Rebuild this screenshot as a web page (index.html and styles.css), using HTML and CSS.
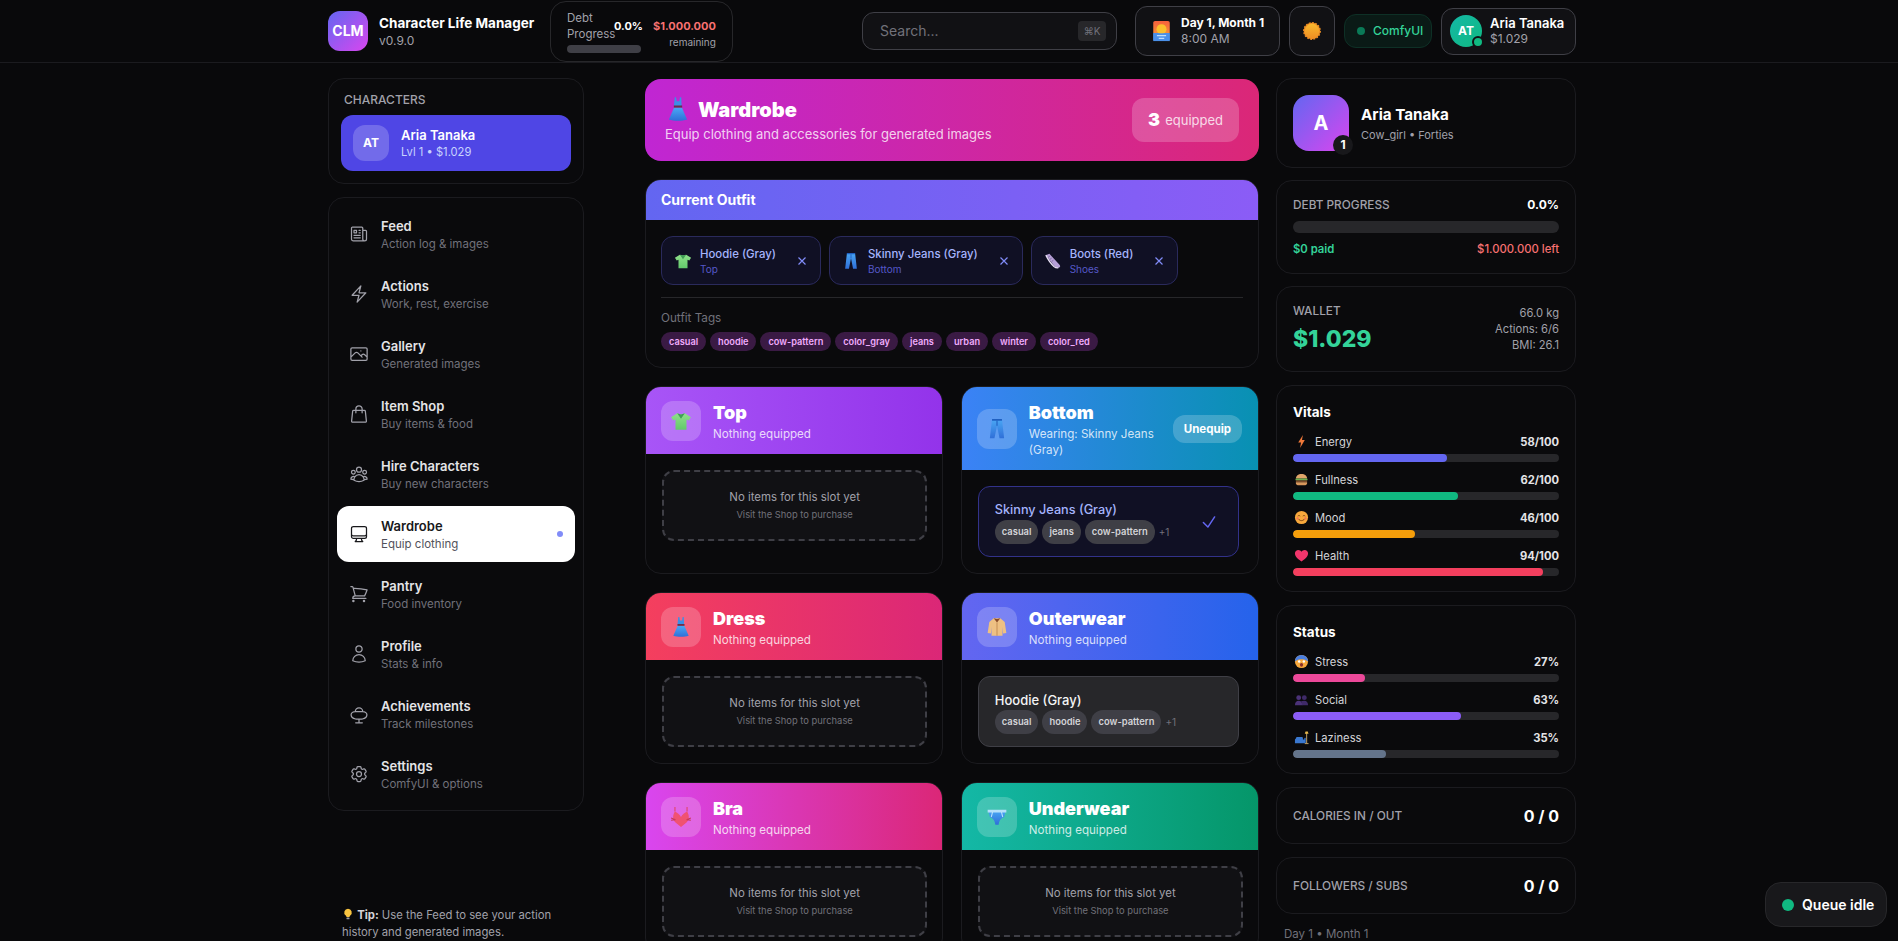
FILE: index.html
```html
<!DOCTYPE html>
<html lang="en">
<head>
  <meta charset="UTF-8">
  <title>Character Life Manager</title>
  <link rel="stylesheet" href="styles.css">
</head>
<body>
  <!-- emoji sprite -->
  <svg class="sprite" xmlns="http://www.w3.org/2000/svg">
    <defs>
      <linearGradient id="g-blue" x1="0" y1="0" x2="0" y2="1"><stop offset="0" stop-color="#4aa8f5"/><stop offset="1" stop-color="#2f6fd8"/></linearGradient>
      <linearGradient id="g-green" x1="0" y1="0" x2="0" y2="1"><stop offset="0" stop-color="#8fe08a"/><stop offset="1" stop-color="#62c96c"/></linearGradient>
      <linearGradient id="g-cal" x1="0" y1="0" x2="0" y2="1"><stop offset="0" stop-color="#f7603c"/><stop offset="0.6" stop-color="#f58a3a"/><stop offset="0.61" stop-color="#4a90e8"/><stop offset="1" stop-color="#3f7fdc"/></linearGradient>
      <linearGradient id="g-sun" x1="0" y1="0" x2="0" y2="1"><stop offset="0" stop-color="#f9b92d"/><stop offset="1" stop-color="#ef8f24"/></linearGradient>
    </defs>
    <symbol id="e-dress" viewBox="0 0 20 20"><path d="M7.5 1h1l.5 3h2l.5-3h1l.3 7h-6z" fill="#3b8fe6"/><path d="M7 8.800h6l4 9.200c-4 1.300-10 1.300-14 0z" fill="url(#g-blue)"/><rect x="6.800" y="7.300" width="6.400" height="1.600" fill="#6b2d4a"/></symbol>
    <symbol id="e-shirt" viewBox="0 0 20 20"><path d="M6.500 3l3.500 1 3.500-1L19 6.500l-2 3-2-.8V18H5V8.700l-2 .8-2-3z" fill="url(#g-green)"/><path d="M6.500 3L10 8l3.500-5-3.500 1z" fill="#3f9e55"/></symbol>
    <symbol id="e-jeans" viewBox="0 0 20 20"><path d="M5.500 1h9l2 17.500h-4.200L10 7l-2.300 11.500H3.500z" fill="url(#g-blue)"/><path d="M5.500 1h9v1.500h-9z" fill="#1f5fc0"/><path d="M10 2.500V7" stroke="#1f5fc0" fill="none"/></symbol>
    <symbol id="e-boot" viewBox="0 0 20 20"><path d="M2 3.500l4-1.500 11.500 12.500c1 1.500.300 3-1.500 3-2 0-3.500-.5-5-2.500z" fill="#b7a0d8"/><path d="M2 3.500c2.500 5 5.500 9.500 9 12.500 1.500 1.200 3.500 1.800 5 1.500" stroke="#e8e0f4" stroke-width="1.400" fill="none"/><path d="M6.500 4.500l-2 1.500m4 .8l-2 1.500m4 .8l-2 1.500" stroke="#7a6a9a" stroke-width="1"/></symbol>
    <symbol id="e-coat" viewBox="0 0 20 20"><path d="M7 2h6l4 3.500 1.500 10-3 .5-.5-6v8H5V10l-.5 6-3-.5L3 5.500z" fill="#eec083"/><path d="M7 2l3 4 3-4-3 .8z" fill="#8a4b2a"/><path d="M10 6v12" stroke="#c9935a"/></symbol>
    <symbol id="e-bra" viewBox="0 0 20 20"><path d="M4.500 1v4M15.500 1v4" stroke="#e0456a" stroke-width="1"/><path d="M4.500 5c2 1 4.500 3 5.500 5 1-2 3.500-4 5.500-5 2 3 2.500 7-.5 10l-5 4-5-4c-3-3-2.500-7-.5-10z" fill="#f05272"/><path d="M1 11l4 1.500m14-1.500l-4 1.500M1 13l4-.5m14 .5l-4-.5" stroke="#c93a5a" stroke-width="1"/></symbol>
    <symbol id="e-briefs" viewBox="0 0 20 20"><path d="M2 4h16l-1.500 6c-2.500 1-4.500 3-5 7h-3c-.5-4-2.500-6-5-7z" fill="url(#g-blue)"/><path d="M2 4h16v1.400H2zM6 5.400L4.800 10M14 5.400l1.200 4.600" stroke="#b6e0fa" stroke-width="1" fill="#b6e0fa"/></symbol>
    <symbol id="e-cal" viewBox="0 0 20 24"><rect x="1" y="1" width="18" height="22" rx="2" fill="url(#g-cal)"/><circle cx="10" cy="10" r="5.500" fill="#fbc02d"/><rect x="1" y="14.500" width="18" height="8.500" fill="#4a90e8"/><path d="M5 17h10M7 20h6" stroke="#bcdcfb" stroke-width="1.200"/></symbol>
    <symbol id="e-sun" viewBox="0 0 20 20"><circle cx="10" cy="10" r="9.200" fill="#ef8f24" stroke="#ef8f24" stroke-width="1.400" stroke-dasharray="2 1.600"/><circle cx="10" cy="10" r="8" fill="url(#g-sun)"/></symbol>
    <symbol id="e-bolt" viewBox="0 0 16 16"><path d="M9.500 1L4.500 9h3L6.500 15l5-8.500h-3z" fill="#f0793a"/></symbol>
    <symbol id="e-burger" viewBox="0 0 16 16"><path d="M2 7c0-3 2.500-5 6-5s6 2 6 5z" fill="#e0a56a"/><rect x="1.500" y="7" width="13" height="2" rx="1" fill="#6fae4f"/><rect x="2" y="9" width="12" height="1.800" fill="#7a4a2a"/><path d="M2 10.800h12v1.200c0 1-1 2-2 2H4c-1 0-2-1-2-2z" fill="#d8985c"/></symbol>
    <symbol id="e-smile" viewBox="0 0 16 16"><circle cx="8" cy="8" r="7" fill="#f7a83c"/><path d="M4 6.500c.8-.8 1.800-.8 2.600 0M9.400 6.500c.8-.8 1.800-.8 2.600 0" stroke="#7a3f12" fill="none"/><path d="M4.800 9.500c1.500 2.400 4.900 2.400 6.400 0" stroke="#7a3f12" fill="none"/><circle cx="3.800" cy="9" r="1.200" fill="#f2705a"/><circle cx="12.200" cy="9" r="1.200" fill="#f2705a"/></symbol>
    <symbol id="e-heart" viewBox="0 0 16 16"><path d="M8 14.500C3 11 1 8.500 1 5.700 1 3.500 2.700 2 4.600 2 6 2 7.300 2.800 8 4c.7-1.200 2-2 3.400-2C13.300 2 15 3.500 15 5.700c0 2.800-2 5.300-7 8.800z" fill="#f0356b"/></symbol>
    <symbol id="e-stress" viewBox="0 0 16 16"><circle cx="8" cy="8" r="7" fill="#f7a83c"/><path d="M1 8a7 7 0 0114 0c-2-2-4.500-2.500-7-2.500S3 6 1 8z" fill="#4a7fe0"/><circle cx="5.500" cy="8" r="1.300" fill="#fff"/><circle cx="10.500" cy="8" r="1.300" fill="#fff"/><ellipse cx="8" cy="11.500" rx="1.700" ry="2" fill="#8a2f2a"/></symbol>
    <symbol id="e-social" viewBox="0 0 16 16"><circle cx="5" cy="6" r="2.600" fill="#4b3278"/><circle cx="11" cy="6" r="2.600" fill="#3f2a68"/><path d="M1 14c0-3 1.500-4.800 4-4.800S9 11 9 14z" fill="#4b3278"/><path d="M8.500 14c0-2-.5-3.500-1-4.300.9-.3 2-.5 3.500-.5 2.500 0 4 1.800 4 4.800z" fill="#3f2a68"/></symbol>
    <symbol id="e-couch" viewBox="0 0 16 16"><path d="M2 9c0-1 1-1.500 2-1.500h4c1 0 1.500.5 1.500 1.500v1H11V9c0-1 1-1 1.500-.5V14H1V10z" fill="#3a78d0"/><path d="M13.500 3v11M11.500 14.500h4" stroke="#c9a86a" stroke-width="1"/><path d="M12.300 1.500h2.400l.8 2.500h-4z" fill="#e8b84a"/></symbol>
    <symbol id="e-bulb" viewBox="0 0 16 16"><path d="M8 1a5 5 0 00-3 9c.6.500 1 1.200 1 2h4c0-.8.400-1.500 1-2a5 5 0 00-3-9z" fill="#f9c440"/><rect x="6" y="12.500" width="4" height="2.500" rx=".8" fill="#9a9aa2"/></symbol>
  </svg>

  <header class="topbar">
    <div class="topbar-inner">
      <div class="brand">
        <div class="brand-logo">CLM</div>
        <div>
          <div class="brand-name">Character Life Manager</div>
          <div class="brand-version">v0.9.0</div>
        </div>
      </div>

      <div class="debt-mini">
        <div class="debt-mini-left">
          <div class="debt-mini-row">
            <span class="debt-mini-label">Debt Progress</span>
            <span class="debt-mini-pct">0.0%</span>
          </div>
          <div class="debt-mini-bar"></div>
        </div>
        <div class="debt-mini-right">
          <div class="debt-mini-amount">$1.000.000</div>
          <div class="debt-mini-rem">remaining</div>
        </div>
      </div>

      <div class="search">
        <span>Search...</span>
        <kbd>⌘K</kbd>
      </div>

      <div class="top-pills">
        <div class="pill pill-date">
          <svg class="pill-cal"><use href="#e-cal"/></svg>
          <div>
            <div class="pill-strong">Day 1, Month 1</div>
            <div class="pill-muted">8:00 AM</div>
          </div>
        </div>
        <div class="pill pill-sun"><svg class="emoji-18"><use href="#e-sun"/></svg></div>
        <div class="pill-comfy"><i></i>ComfyUI</div>
        <div class="pill pill-user">
          <div class="user-avatar">AT<i></i></div>
          <div>
            <div class="pill-strong pill-name">Aria Tanaka</div>
            <div class="pill-muted">$1.029</div>
          </div>
        </div>
      </div>
    </div>
  </header>

  <div class="layout">
    <aside class="sidebar">
      <section class="card chars">
        <h4 class="chars-title">CHARACTERS</h4>
        <div class="char-btn">
          <div class="char-avatar">AT</div>
          <div>
            <div class="char-name">Aria Tanaka</div>
            <div class="char-sub">Lvl 1 • $1.029</div>
          </div>
        </div>
      </section>

      <nav class="card nav">
        <a class="nav-item">
          <svg class="nav-icon" viewBox="0 0 24 24"><path d="M12 7.500h1.500m-1.500 3h1.500m-7.500 3h7.500m-7.500 3h7.500m3-9h3.375c.621 0 1.125.504 1.125 1.125V18a2.250 2.250 0 01-2.250 2.250M16.500 7.500V18a2.250 2.250 0 002.250 2.250M16.500 7.500V4.875c0-.621-.504-1.125-1.125-1.125H4.125C3.504 3.750 3 4.254 3 4.875V18a2.250 2.250 0 002.250 2.250h13.500M6 7.500h3v3H6v-3z"/></svg>
          <div><div class="nav-title">Feed</div><div class="nav-sub">Action log &amp; images</div></div>
        </a>
        <a class="nav-item">
          <svg class="nav-icon" viewBox="0 0 24 24"><path d="M3.750 13.500l10.500-11.250L12 10.500h8.250L9.750 21.750 12 13.500H3.750z"/></svg>
          <div><div class="nav-title">Actions</div><div class="nav-sub">Work, rest, exercise</div></div>
        </a>
        <a class="nav-item">
          <svg class="nav-icon" viewBox="0 0 24 24"><path d="M2.250 15.750l5.159-5.159a2.250 2.250 0 013.182 0l5.159 5.159m-1.500-1.500l1.409-1.409a2.250 2.250 0 013.182 0l2.909 2.909m-18 3.750h16.500a1.500 1.500 0 001.500-1.500V6a1.500 1.500 0 00-1.500-1.500H3.750A1.500 1.500 0 002.250 6v12a1.500 1.500 0 001.500 1.500zm10.500-11.250h.008v.008h-.008V8.250z"/></svg>
          <div><div class="nav-title">Gallery</div><div class="nav-sub">Generated images</div></div>
        </a>
        <a class="nav-item">
          <svg class="nav-icon" viewBox="0 0 24 24"><path d="M15.750 10.500V6a3.750 3.750 0 10-7.500 0v4.500m11.356-1.993l1.263 12c.07.665-.45 1.243-1.119 1.243H4.250a1.125 1.125 0 01-1.120-1.243l1.264-12A1.125 1.125 0 015.513 7.500h12.974c.576 0 1.059.435 1.119 1.007z"/></svg>
          <div><div class="nav-title">Item Shop</div><div class="nav-sub">Buy items &amp; food</div></div>
        </a>
        <a class="nav-item">
          <svg class="nav-icon" viewBox="0 0 24 24"><path d="M18 18.720a9.094 9.094 0 003.741-.479 3 3 0 00-4.682-2.720m.94 3.198l.001.031c0 .225-.012.447-.037.666A11.944 11.944 0 0112 21c-2.170 0-4.207-.576-5.963-1.584A6.062 6.062 0 016 18.719m12 0a5.971 5.971 0 00-.941-3.197m0 0A5.995 5.995 0 0012 12.750a5.995 5.995 0 00-5.058 2.772m0 0a3 3 0 00-4.681 2.720 8.986 8.986 0 003.740.477m.94-3.197a5.971 5.971 0 00-.94 3.197M15 6.750a3 3 0 11-6 0 3 3 0 016 0zm6 3a2.250 2.250 0 11-4.500 0 2.250 2.250 0 014.500 0zm-13.500 0a2.250 2.250 0 11-4.500 0 2.250 2.250 0 014.500 0z"/></svg>
          <div><div class="nav-title">Hire Characters</div><div class="nav-sub">Buy new characters</div></div>
        </a>
        <a class="nav-item active">
          <svg class="nav-icon" viewBox="0 0 24 24"><path d="M9 17.250v1.007a3 3 0 01-.879 2.122L7.500 21h9l-.621-.621A3 3 0 0115 18.257V17.250m6-12V15a2.250 2.250 0 01-2.250 2.250H5.250A2.250 2.250 0 013 15V5.250m18 0A2.250 2.250 0 0018.750 3H5.250A2.250 2.250 0 003 5.250m18 0V12a2.250 2.250 0 01-2.250 2.250H5.250A2.250 2.250 0 013 12V5.250"/></svg>
          <div><div class="nav-title">Wardrobe</div><div class="nav-sub">Equip clothing</div></div>
          <i class="nav-dot"></i>
        </a>
        <a class="nav-item">
          <svg class="nav-icon" viewBox="0 0 24 24"><path d="M2.250 3h1.386c.51 0 .955.343 1.087.835l.383 1.437M7.500 14.250a3 3 0 00-3 3h15.750m-12.750-3h11.218c1.121-2.300 2.100-4.684 2.924-7.138a60.114 60.114 0 00-16.536-1.840M7.500 14.250L5.106 5.272M6 20.250a.75.75 0 11-1.500 0 .75.75 0 011.500 0zm12.750 0a.75.75 0 11-1.500 0 .75.75 0 011.500 0z"/></svg>
          <div><div class="nav-title">Pantry</div><div class="nav-sub">Food inventory</div></div>
        </a>
        <a class="nav-item">
          <svg class="nav-icon" viewBox="0 0 24 24"><path d="M15.750 6a3.750 3.750 0 11-7.500 0 3.750 3.750 0 017.500 0zM4.501 20.118a7.500 7.500 0 0114.998 0A17.933 17.933 0 0112 21.750c-2.676 0-5.216-.584-7.499-1.632z"/></svg>
          <div><div class="nav-title">Profile</div><div class="nav-sub">Stats &amp; info</div></div>
        </a>
        <a class="nav-item">
          <svg class="nav-icon" viewBox="0 0 24 24"><path d="M7.500 9a4.500 4.500 0 019 0M7.500 9C5 9 2.500 10.500 2.500 13s2.500 4.500 5.500 5h8c3-.5 5.500-2.500 5.500-5s-2.500-4-5-4h-9zM12 18v4M8 22.500h8"/></svg>
          <div><div class="nav-title">Achievements</div><div class="nav-sub">Track milestones</div></div>
        </a>
        <a class="nav-item">
          <svg class="nav-icon" viewBox="0 0 24 24"><path d="M9.594 3.940c.09-.542.56-.94 1.110-.94h2.593c.55 0 1.020.398 1.110.94l.213 1.281c.063.374.313.686.645.870.074.04.147.083.22.127.324.196.72.257 1.075.124l1.217-.456a1.125 1.125 0 011.370.49l1.296 2.247a1.125 1.125 0 01-.26 1.431l-1.003.827c-.293.24-.438.613-.431.992a6.759 6.759 0 010 .255c-.007.378.138.75.43.99l1.005.828c.424.35.534.954.26 1.430l-1.298 2.247a1.125 1.125 0 01-1.369.491l-1.217-.456c-.355-.133-.75-.072-1.076.124a6.570 6.570 0 01-.22.128c-.331.183-.581.495-.644.869l-.213 1.280c-.09.543-.56.941-1.110.941h-2.594c-.55 0-1.020-.398-1.110-.94l-.213-1.281c-.062-.374-.312-.686-.644-.870a6.520 6.520 0 01-.22-.127c-.325-.196-.72-.257-1.076-.124l-1.217.456a1.125 1.125 0 01-1.369-.49l-1.297-2.247a1.125 1.125 0 01.26-1.431l1.004-.827c.292-.24.437-.613.43-.992a6.932 6.932 0 010-.255c.007-.378-.138-.75-.43-.99l-1.004-.828a1.125 1.125 0 01-.26-1.430l1.297-2.247a1.125 1.125 0 011.370-.491l1.216.456c.356.133.751.072 1.076-.124.072-.044.146-.087.22-.128.332-.183.582-.495.644-.869l.214-1.281zM15 12a3 3 0 11-6 0 3 3 0 016 0z"/></svg>
          <div><div class="nav-title">Settings</div><div class="nav-sub">ComfyUI &amp; options</div></div>
        </a>
      </nav>

      <p class="tip"><svg class="emoji-12"><use href="#e-bulb"/></svg> <b>Tip:</b> Use the Feed to see your action history and generated images.</p>
    </aside>

    <main class="main">
      <section class="banner">
        <div>
          <h1 class="banner-title"><svg class="emoji-24"><use href="#e-dress"/></svg>Wardrobe</h1>
          <p class="banner-sub">Equip clothing and accessories for generated images</p>
        </div>
        <div class="banner-badge"><b>3</b> equipped</div>
      </section>

      <section class="card outfit">
        <div class="outfit-head">Current Outfit</div>
        <div class="outfit-body">
          <div class="chips">
            <div class="chip">
              <svg class="emoji-16"><use href="#e-shirt"/></svg>
              <div class="chip-text"><div class="chip-name">Hoodie (Gray)</div><div class="chip-slot">Top</div></div>
              <svg class="chip-x" viewBox="0 0 12 12"><path d="M2.500 2.500l7 7m0-7l-7 7"/></svg>
            </div>
            <div class="chip">
              <svg class="emoji-16"><use href="#e-jeans"/></svg>
              <div class="chip-text"><div class="chip-name">Skinny Jeans (Gray)</div><div class="chip-slot">Bottom</div></div>
              <svg class="chip-x" viewBox="0 0 12 12"><path d="M2.500 2.500l7 7m0-7l-7 7"/></svg>
            </div>
            <div class="chip">
              <svg class="emoji-16"><use href="#e-boot"/></svg>
              <div class="chip-text"><div class="chip-name">Boots (Red)</div><div class="chip-slot">Shoes</div></div>
              <svg class="chip-x" viewBox="0 0 12 12"><path d="M2.500 2.500l7 7m0-7l-7 7"/></svg>
            </div>
          </div>
          <div class="outfit-tags">
            <div class="outfit-tags-label">Outfit Tags</div>
            <div class="tags">
              <span class="tag-pink">casual</span>
              <span class="tag-pink">hoodie</span>
              <span class="tag-pink">cow-pattern</span>
              <span class="tag-pink">color_gray</span>
              <span class="tag-pink">jeans</span>
              <span class="tag-pink">urban</span>
              <span class="tag-pink">winter</span>
              <span class="tag-pink">color_red</span>
            </div>
          </div>
        </div>
      </section>

      <div class="slots">
        <section class="card slot">
          <div class="slot-head g-top">
            <div class="slot-icon"><svg class="emoji-20"><use href="#e-shirt"/></svg></div>
            <div class="slot-info"><h3>Top</h3><p>Nothing equipped</p></div>
          </div>
          <div class="slot-body">
            <div class="empty"><div class="empty-main">No items for this slot yet</div><div class="empty-sub">Visit the Shop to purchase</div></div>
          </div>
        </section>

        <section class="card slot">
          <div class="slot-head g-bottom">
            <div class="slot-icon"><svg class="emoji-20"><use href="#e-jeans"/></svg></div>
            <div class="slot-info"><h3>Bottom</h3><p>Wearing: Skinny Jeans (Gray)</p></div>
            <button class="unequip">Unequip</button>
          </div>
          <div class="slot-body">
            <div class="item item-on">
              <div class="item-main">
                <div class="item-name">Skinny Jeans (Gray)</div>
                <div class="item-tags"><span>casual</span><span>jeans</span><span>cow-pattern</span><em>+1</em></div>
              </div>
              <svg class="item-check" viewBox="0 0 24 24"><path d="M4.500 12.750l6 6 9-13.500"/></svg>
            </div>
          </div>
        </section>

        <section class="card slot">
          <div class="slot-head g-dress">
            <div class="slot-icon"><svg class="emoji-20"><use href="#e-dress"/></svg></div>
            <div class="slot-info"><h3>Dress</h3><p>Nothing equipped</p></div>
          </div>
          <div class="slot-body">
            <div class="empty"><div class="empty-main">No items for this slot yet</div><div class="empty-sub">Visit the Shop to purchase</div></div>
          </div>
        </section>

        <section class="card slot">
          <div class="slot-head g-outer">
            <div class="slot-icon"><svg class="emoji-20"><use href="#e-coat"/></svg></div>
            <div class="slot-info"><h3>Outerwear</h3><p>Nothing equipped</p></div>
          </div>
          <div class="slot-body">
            <div class="item">
              <div class="item-main">
                <div class="item-name">Hoodie (Gray)</div>
                <div class="item-tags"><span>casual</span><span>hoodie</span><span>cow-pattern</span><em>+1</em></div>
              </div>
            </div>
          </div>
        </section>

        <section class="card slot">
          <div class="slot-head g-bra">
            <div class="slot-icon"><svg class="emoji-20"><use href="#e-bra"/></svg></div>
            <div class="slot-info"><h3>Bra</h3><p>Nothing equipped</p></div>
          </div>
          <div class="slot-body">
            <div class="empty"><div class="empty-main">No items for this slot yet</div><div class="empty-sub">Visit the Shop to purchase</div></div>
          </div>
        </section>

        <section class="card slot">
          <div class="slot-head g-under">
            <div class="slot-icon"><svg class="emoji-20"><use href="#e-briefs"/></svg></div>
            <div class="slot-info"><h3>Underwear</h3><p>Nothing equipped</p></div>
          </div>
          <div class="slot-body">
            <div class="empty"><div class="empty-main">No items for this slot yet</div><div class="empty-sub">Visit the Shop to purchase</div></div>
          </div>
        </section>
      </div>
    </main>

    <aside class="rightbar">
      <section class="card profile">
        <div class="profile-avatar">A<span class="profile-level">1</span></div>
        <div>
          <div class="profile-name">Aria Tanaka</div>
          <div class="profile-sub">Cow_girl • Forties</div>
        </div>
      </section>

      <section class="card pad">
        <div class="row-between">
          <span class="label">DEBT PROGRESS</span>
          <span class="debt-pct">0.0%</span>
        </div>
        <div class="debt-bar"></div>
        <div class="row-between debt-foot">
          <span class="paid">$0 paid</span>
          <span class="left">$1.000.000 left</span>
        </div>
      </section>

      <section class="card pad wallet">
        <div>
          <div class="label">WALLET</div>
          <div class="wallet-amount">$1.029</div>
        </div>
        <div class="wallet-stats">
          <div>66.0 kg</div>
          <div>Actions: 6/6</div>
          <div>BMI: 26.1</div>
        </div>
      </section>

      <section class="card pad">
        <h4 class="stats-title">Vitals</h4>
        <div class="stat">
          <div class="stat-row"><svg class="emoji-14"><use href="#e-bolt"/></svg><span class="stat-name">Energy</span><span class="stat-val">58/100</span></div>
          <div class="stat-track"><div class="stat-fill c-energy" style="width: 58%"></div></div>
        </div>
        <div class="stat">
          <div class="stat-row"><svg class="emoji-14"><use href="#e-burger"/></svg><span class="stat-name">Fullness</span><span class="stat-val">62/100</span></div>
          <div class="stat-track"><div class="stat-fill c-full" style="width: 62%"></div></div>
        </div>
        <div class="stat">
          <div class="stat-row"><svg class="emoji-14"><use href="#e-smile"/></svg><span class="stat-name">Mood</span><span class="stat-val">46/100</span></div>
          <div class="stat-track"><div class="stat-fill c-mood" style="width: 46%"></div></div>
        </div>
        <div class="stat">
          <div class="stat-row"><svg class="emoji-14"><use href="#e-heart"/></svg><span class="stat-name">Health</span><span class="stat-val">94/100</span></div>
          <div class="stat-track"><div class="stat-fill c-health" style="width: 94%"></div></div>
        </div>
      </section>

      <section class="card pad">
        <h4 class="stats-title">Status</h4>
        <div class="stat">
          <div class="stat-row"><svg class="emoji-14"><use href="#e-stress"/></svg><span class="stat-name">Stress</span><span class="stat-val">27%</span></div>
          <div class="stat-track"><div class="stat-fill c-stress" style="width: 27%"></div></div>
        </div>
        <div class="stat">
          <div class="stat-row"><svg class="emoji-14"><use href="#e-social"/></svg><span class="stat-name">Social</span><span class="stat-val">63%</span></div>
          <div class="stat-track"><div class="stat-fill c-social" style="width: 63%"></div></div>
        </div>
        <div class="stat">
          <div class="stat-row"><svg class="emoji-14"><use href="#e-couch"/></svg><span class="stat-name">Laziness</span><span class="stat-val">35%</span></div>
          <div class="stat-track"><div class="stat-fill c-lazy" style="width: 35%"></div></div>
        </div>
      </section>

      <section class="card pad row-between">
        <span class="label">CALORIES IN / OUT</span>
        <span class="big-val">0 / 0</span>
      </section>

      <section class="card pad row-between">
        <span class="label">FOLLOWERS / SUBS</span>
        <span class="big-val">0 / 0</span>
      </section>

      <div class="day-note">Day 1 • Month 1</div>
    </aside>
  </div>

  <div class="queue"><i></i>Queue idle</div>
</body>
</html>
```

FILE: styles.css
```css
* {
  margin: 0;
  padding: 0;
  box-sizing: border-box;
}

body {
  font-family: 'Inter', 'Noto Sans', sans-serif;
  background: #09090b;
  color: #fff;
  height: 100vh;
  overflow: hidden;
  font-size: 12px;
  line-height: 16px;
}

.sprite {
  display: block;
  width: 0;
  height: 0;
}

.card {
  background: #0a0a0c;
  border: 1px solid #1b1b1f;
  border-radius: 16px;
}

.pad {
  padding: 16px 16px 15.3px;
}

/* Emoji sizes */
.emoji-12 { width: 12px; height: 12px; vertical-align: -1px; }
.emoji-14 { width: 15px; height: 15px; flex: none; }
.emoji-16 { width: 18px; height: 18px; flex: none; }
.emoji-18 { width: 18px; height: 18px; }
.emoji-20 { width: 22px; height: 22px; }
.emoji-24 { width: 26px; height: 26px; margin-right: 7px; vertical-align: -5px; }

/* Top bar */
.topbar {
  height: 63px;
  border-bottom: 1px solid #1b1b1f;
}

.topbar-inner {
  width: 1248px;
  height: 62px;
  margin-left: 328px;
  display: flex;
  align-items: center;
}

.brand {
  width: 205px;
  flex: none;
  display: flex;
  align-items: center;
  gap: 11px;
}

.brand-logo {
  width: 40px;
  height: 40px;
  flex: none;
  border-radius: 12px;
  background: linear-gradient(135deg, #6366f1, #d946ef);
  display: flex;
  align-items: center;
  justify-content: center;
  font-size: 14px;
  font-weight: 700;
}

.brand-name {
  font-size: 13.5px;
  line-height: 20px;
  font-weight: 700;
  white-space: nowrap;
}

.brand-version {
  color: #a1a1aa;
}

.debt-mini {
  margin-left: 17px;
  height: 61px;
  padding: 8px 16px;
  display: flex;
  align-items: flex-start;
  gap: 12px;
  border: 1px solid #27272a;
  border-radius: 16px;
}

.debt-mini-left {
  width: 74px;
}

.debt-mini-row {
  display: flex;
  align-items: center;
}

.debt-mini-label {
  width: 47px;
  font-size: 11.5px;
  color: #a1a1aa;
}

.debt-mini-pct {
  font-size: 11px;
  font-weight: 700;
}

.debt-mini-bar {
  height: 8px;
  margin-top: 3px;
  border-radius: 4px;
  background: #3f3f46;
}

.debt-mini-right {
  text-align: right;
  padding-top: 8px;
}

.debt-mini-amount {
  font-size: 11px;
  font-weight: 700;
  color: #f87171;
}

.debt-mini-rem {
  font-size: 10px;
  color: #a1a1aa;
}

.search {
  margin-left: auto;
  width: 255px;
  height: 38px;
  padding: 0 10px 0 17px;
  display: flex;
  align-items: center;
  justify-content: space-between;
  font-size: 14px;
  color: #71717a;
  background: #111114;
  border: 1px solid #3f3f46;
  border-radius: 12px;
}

.search kbd {
  width: 28px;
  height: 20px;
  display: flex;
  align-items: center;
  justify-content: center;
  font-family: inherit;
  font-size: 10px;
  color: #71717a;
  background: #27272a;
  border-radius: 4px;
}

.top-pills {
  margin-left: 18px;
  display: flex;
  align-items: center;
  gap: 9px;
}

.pill {
  display: flex;
  align-items: center;
  background: #111114;
  border: 1px solid #3f3f46;
  border-radius: 12px;
}

.pill-date {
  height: 50px;
  width: 145px;
  padding-left: 16px;
  gap: 10px;
}

.pill-cal {
  width: 19px;
  height: 22px;
}

.pill-sun {
  width: 46px;
  height: 50px;
  justify-content: center;
}

.pill-strong {
  font-weight: 700;
  color: #fff;
}

.pill-name {
  font-size: 13px;
  font-weight: 600;
}

.pill-muted {
  color: #a1a1aa;
}

.pill-comfy {
  width: 88px;
  height: 34px;
  padding-left: 12px;
  display: flex;
  align-items: center;
  gap: 8px;
  color: #34d399;
  font-weight: 500;
  background: #0a1a16;
  border: 1px solid #0e3026;
  border-radius: 12px;
}

.pill-comfy i {
  width: 8px;
  height: 8px;
  border-radius: 50%;
  background: #0a7a57;
}

.pill-user {
  width: 135px;
  height: 47px;
  padding-left: 8px;
  gap: 8px;
}

.user-avatar {
  position: relative;
  width: 32px;
  height: 32px;
  border-radius: 50%;
  background: linear-gradient(135deg, #14b8a6, #10b981);
  display: flex;
  align-items: center;
  justify-content: center;
  font-weight: 700;
}

.user-avatar i {
  position: absolute;
  right: -2px;
  bottom: -1px;
  width: 12px;
  height: 12px;
  border-radius: 50%;
  background: #10b981;
  border: 2px solid #111114;
}

/* Page columns */
.layout {
  width: 1248px;
  margin-left: 328px;
  padding-top: 15px;
  display: flex;
  height: calc(100vh - 63px);
}

.sidebar {
  width: 256px;
  flex: none;
  display: flex;
  flex-direction: column;
  gap: 13px;
}

.main {
  width: 614px;
  flex: none;
  margin-left: 61px;
  display: flex;
  flex-direction: column;
  gap: 18px;
  padding-top: 1px;
}

.rightbar {
  width: 300px;
  flex: none;
  margin-left: 17px;
  display: flex;
  flex-direction: column;
  gap: 12.8px;
}

.sidebar > *,
.main > *,
.rightbar > * {
  flex: none;
}

/* Sidebar */
.chars {
  padding: 13px 12px 12px;
}

.chars-title {
  font-size: 12px;
  font-weight: 500;
  color: #a1a1aa;
  margin-bottom: 7px;
  padding-left: 3px;
}

.char-btn {
  height: 56px;
  padding: 0 12px;
  display: flex;
  align-items: center;
  gap: 12px;
  background: #4f46e5;
  border-radius: 12px;
}

.char-avatar {
  width: 36px;
  height: 36px;
  border-radius: 12px;
  background: rgba(255, 255, 255, 0.2);
  display: flex;
  align-items: center;
  justify-content: center;
  font-weight: 700;
}

.char-name {
  font-size: 13px;
  line-height: 18px;
  font-weight: 600;
}

.char-sub {
  font-size: 11.2px;
  color: #c7d2fe;
}

.nav {
  padding: 8px;
  display: flex;
  flex-direction: column;
  gap: 4px;
}

.nav-item {
  height: 56px;
  padding: 0 12px;
  display: flex;
  align-items: center;
  gap: 12px;
  border-radius: 12px;
}

.nav-icon {
  width: 20px;
  height: 20px;
  flex: none;
  fill: none;
  stroke: #a1a1aa;
  stroke-width: 1.5;
  stroke-linecap: round;
  stroke-linejoin: round;
}

.nav-title {
  font-size: 13px;
  line-height: 20px;
  font-weight: 600;
  color: #e4e4e7;
}

.nav-sub {
  font-size: 11.5px;
  color: #71717a;
}

.nav-item.active {
  background: #fff;
}

.nav-item.active .nav-icon {
  stroke: #18181b;
}

.nav-item.active .nav-title {
  color: #18181b;
}

.nav-item.active .nav-sub {
  color: #52525b;
}

.nav-dot {
  margin-left: auto;
  width: 6px;
  height: 6px;
  border-radius: 50%;
  background: #818cf8;
}

.tip {
  margin-top: auto;
  padding: 0 13px 0 14px;
  font-size: 11.3px;
  color: #a1a1aa;
  line-height: 17px;
}

.tip b {
  color: #d4d4d8;
  font-weight: 700;
}

/* Banner */
.banner {
  height: 82px;
  padding: 0 20px;
  display: flex;
  align-items: center;
  justify-content: space-between;
  background: linear-gradient(90deg, #c026d3, #db2777);
  border-radius: 16px;
}

.banner-title {
  font-size: 20px;
  line-height: 28px;
  font-weight: 900;
}

.banner-sub {
  font-size: 13px;
  line-height: 20px;
  color: rgba(255, 255, 255, 0.8);
}

.banner-badge {
  height: 44px;
  padding: 0 16px;
  display: flex;
  align-items: center;
  gap: 5px;
  font-size: 13px;
  color: rgba(255, 255, 255, 0.8);
  background: rgba(255, 255, 255, 0.2);
  border-radius: 12px;
}

.banner-badge b {
  font-size: 18px;
  font-weight: 900;
  color: #fff;
}

/* Current outfit */
.outfit {
  overflow: hidden;
}

.outfit-head {
  height: 40px;
  padding: 0 15px;
  display: flex;
  align-items: center;
  font-size: 14px;
  font-weight: 700;
  background: linear-gradient(90deg, #6366f1, #8b5cf6);
}

.outfit-body {
  padding: 16px 15px;
}

.chips {
  display: flex;
  gap: 8px;
}

.chip {
  height: 49px;
  padding: 0 12px;
  display: flex;
  align-items: center;
  gap: 8px;
  background: #101024;
  border: 1px solid #2a2a5c;
  border-radius: 12px;
}

.chip-text {
  margin-right: 12px;
}

.chip-name {
  font-size: 11.4px;
  font-weight: 500;
  color: #a5b4fc;
}

.chip-slot {
  font-size: 10px;
  line-height: 14px;
  color: #5558c8;
}

.chip-x {
  width: 12px;
  height: 12px;
  fill: none;
  stroke: #818cf8;
  stroke-width: 1.2;
}

.outfit-tags {
  margin-top: 12px;
  padding-top: 12px;
  border-top: 1px solid #27272a;
}

.outfit-tags-label {
  font-size: 11.7px;
  color: #71717a;
  margin-bottom: 6px;
}

.tags {
  display: flex;
  gap: 4px;
}

.tag-pink {
  height: 19px;
  padding: 0 8px;
  display: flex;
  align-items: center;
  font-size: 9.2px;
  font-weight: 600;
  color: #f0abfc;
  background: #3a1a44;
  border-radius: 10px;
}

/* Slot cards */
.slots {
  display: grid;
  grid-template-columns: 1fr 1fr;
  column-gap: 17.6px;
  row-gap: 18px;
  align-items: stretch;
}

.slot {
  overflow: hidden;
}

.slot-head {
  min-height: 67px;
  padding: 12px 16px 12px 15px;
  display: flex;
  align-items: center;
  gap: 12px;
}

.g-top { background: linear-gradient(90deg, #a855f7, #9333ea); }
.g-bottom { background: linear-gradient(90deg, #3b82f6, #0891b2); }
.g-dress { background: linear-gradient(90deg, #f43f5e, #db2777); }
.g-outer { background: linear-gradient(90deg, #6366f1, #2563eb); }
.g-bra { background: linear-gradient(90deg, #d946ef, #db2777); }
.g-under { background: linear-gradient(90deg, #14b8a6, #059669); }

.slot-icon {
  width: 40px;
  height: 40px;
  flex: none;
  border-radius: 12px;
  background: rgba(255, 255, 255, 0.2);
  display: flex;
  align-items: center;
  justify-content: center;
}

.slot-info {
  flex: 1;
  min-width: 0;
}

.slot-info h3 {
  font-size: 18px;
  line-height: 27px;
  font-weight: 900;
}

.slot-info p {
  font-size: 11.6px;
  color: rgba(255, 255, 255, 0.8);
}

.unequip {
  flex: none;
  height: 28px;
  padding: 0 11px;
  font-family: inherit;
  font-size: 11.5px;
  font-weight: 700;
  color: #fff;
  background: rgba(255, 255, 255, 0.2);
  border: none;
  border-radius: 12px;
}

.slot-body {
  padding: 16px 15px 16px 16px;
}

.empty {
  height: 71px;
  display: flex;
  flex-direction: column;
  align-items: center;
  justify-content: center;
  gap: 3px;
  text-align: center;
  background: #111114;
  border: 2px dashed #3f3f46;
  border-radius: 12px;
}

.empty-main {
  font-size: 11.4px;
  color: #a1a1aa;
}

.empty-sub {
  font-size: 9.4px;
  line-height: 14px;
  color: #71717a;
}

.item {
  height: 71px;
  margin-right: 4px;
  padding: 0 16px;
  display: flex;
  align-items: center;
  justify-content: space-between;
  background: #27272a;
  border: 1px solid #3f3f46;
  border-radius: 12px;
}

.item-name {
  font-size: 13px;
  line-height: 20px;
  font-weight: 500;
  color: #f4f4f5;
}

.item-tags {
  display: flex;
  align-items: center;
  gap: 4px;
}

.item-tags span {
  height: 24px;
  padding: 0 7px;
  display: flex;
  align-items: center;
  font-size: 9.4px;
  font-weight: 600;
  color: #d4d4d8;
  background: #3f3f46;
  border-radius: 12px;
}

.item-tags em {
  font-style: normal;
  font-size: 10px;
  color: #71717a;
}

.item-on {
  background: #101024;
  border-color: #32328a;
}

.item-on .item-name {
  font-size: 12.7px;
  color: #a5b4fc;
}

.item-check {
  width: 18px;
  height: 18px;
  margin-right: 4px;
  fill: none;
  stroke: #6366f1;
  stroke-width: 2;
  stroke-linecap: round;
  stroke-linejoin: round;
}

/* Right column */
.profile {
  height: 89.6px;
  padding: 0 16px;
  display: flex;
  align-items: center;
  gap: 12px;
}

.profile-avatar {
  position: relative;
  width: 56px;
  height: 56px;
  flex: none;
  border-radius: 16px;
  background: linear-gradient(135deg, #6366f1, #d946ef);
  display: flex;
  align-items: center;
  justify-content: center;
  font-size: 20px;
  font-weight: 700;
}

.profile-level {
  position: absolute;
  right: -4px;
  bottom: -4px;
  width: 20px;
  height: 20px;
  border-radius: 50%;
  background: #18181b;
  display: flex;
  align-items: center;
  justify-content: center;
  font-size: 12px;
  font-weight: 700;
}

.profile-name {
  font-size: 15.2px;
  line-height: 24px;
  font-weight: 700;
}

.profile-sub {
  font-size: 11px;
  color: #a1a1aa;
}

.row-between {
  display: flex;
  align-items: center;
  justify-content: space-between;
}

.label {
  font-size: 11.8px;
  font-weight: 500;
  color: #a1a1aa;
}

.debt-pct {
  font-weight: 700;
}

.debt-bar {
  height: 12px;
  margin: 8px 0;
  border-radius: 6px;
  background: #27272a;
}

.paid {
  font-size: 11.3px;
  font-weight: 600;
  color: #34d399;
}

.left {
  font-size: 11.3px;
  font-weight: 500;
  color: #f87171;
}

.wallet {
  display: flex;
  align-items: center;
  justify-content: space-between;
}

.wallet-amount {
  margin-top: 4px;
  font-size: 23px;
  line-height: 32px;
  font-weight: 800;
  color: #34d399;
}

.wallet-stats {
  font-size: 11.2px;
  text-align: right;
  color: #a1a1aa;
}

.stats-title {
  font-size: 13.5px;
  line-height: 20px;
  font-weight: 700;
  margin-bottom: 12px;
}

.stat + .stat {
  margin-top: 10px;
}

.stat-row {
  display: flex;
  align-items: center;
  margin-bottom: 4px;
  padding-left: 1px;
  height: 16px;
}

.stat-name {
  margin-left: 6px;
  font-size: 11.2px;
  color: #d4d4d8;
}

.stat-val {
  margin-left: auto;
  font-size: 11.2px;
  font-weight: 700;
  color: #e4e4e7;
}

.stat-track {
  height: 8px;
  border-radius: 4px;
  background: #27272a;
  overflow: hidden;
}

.stat-fill {
  height: 100%;
  border-radius: 4px;
}

.c-energy { background: #6366f1; }
.c-full { background: #10b981; }
.c-mood { background: #f59e0b; }
.c-health { background: #f43f5e; }
.c-stress { background: #ec4899; }
.c-social { background: #8b5cf6; }
.c-lazy { background: #64748b; }

.big-val {
  font-size: 16px;
  line-height: 24px;
  font-weight: 700;
}

.day-note {
  padding-left: 8px;
  font-size: 11.5px;
  line-height: 14px;
  color: #71717a;
}

/* Queue toast */
.queue {
  position: fixed;
  right: 11px;
  bottom: 14px;
  width: 122px;
  height: 45px;
  padding-left: 16px;
  display: flex;
  align-items: center;
  gap: 8px;
  font-size: 14px;
  font-weight: 600;
  background: #18181b;
  border: 1px solid #27272a;
  border-radius: 16px;
}

.queue i {
  width: 12px;
  height: 12px;
  border-radius: 50%;
  background: #10b981;
}
```
